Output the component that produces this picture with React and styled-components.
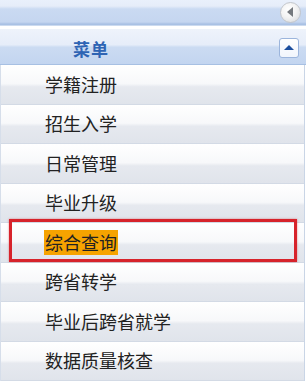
import React from "react";
import styled, { createGlobalStyle } from "styled-components";

const GlobalStyle = createGlobalStyle`
  body {
    margin: 0;
    background: #ffffff;
    font-family: "Microsoft YaHei", "Noto Sans CJK SC", "Noto Sans", sans-serif;
  }
`;

const Panel = styled.div`
  width: 306px;
  display: flex;
  flex-direction: column;
`;

const TopBar = styled.div`
  height: 26px;
  display: flex;
  align-items: center;
  justify-content: flex-end;
  padding-right: 5px;
  box-sizing: border-box;
  background: linear-gradient(
    #e9f0fb 0,
    #e6edf9 6px,
    #cadaf2 9px,
    #c5d6f0 22px,
    #a9c1e4 24px,
    #a9c1e4 25px,
    #eef3fa 26px
  );
  margin-bottom: 3px;
`;

const CircleButton = styled.div`
  width: 19px;
  height: 19px;
  border-radius: 50%;
  border: 1px solid #c3c6cb;
  background: radial-gradient(circle at 40% 35%, #ffffff 0, #f3f3f3 45%, #d3d6da 100%);
  display: flex;
  align-items: center;
  justify-content: center;
  margin-top: -2px;
`;

const LeftArrow = styled.span`
  width: 0;
  height: 0;
  border-top: 5px solid transparent;
  border-bottom: 5px solid transparent;
  border-right: 6px solid #74787d;
  margin-left: -2px;
`;

const Header = styled.div`
  height: 36px;
  box-sizing: border-box;
  border-bottom: 1px solid #a7c0e3;
  display: flex;
  align-items: center;
  justify-content: space-between;
  padding: 0 7px 0 73px;
  background: linear-gradient(#eef3fb 0, #e6edf9 45%, #cbdbf2 52%, #c3d5f0 100%);
`;

const HeaderTitle = styled.span`
  font-size: 17px;
  font-weight: bold;
  color: #2e64b4;
  letter-spacing: 1px;
  margin-top: 3px;
`;

const ToggleButton = styled.div`
  width: 18px;
  height: 18px;
  border: 1px solid #9cb5dc;
  border-radius: 3px;
  background: linear-gradient(#ffffff, #f1f5fc);
  display: flex;
  align-items: center;
  justify-content: center;
  margin-top: 2px;
`;

const UpArrow = styled.span`
  width: 0;
  height: 0;
  border-left: 5px solid transparent;
  border-right: 5px solid transparent;
  border-bottom: 5px solid #1d4f9e;
`;

const List = styled.div`
  display: flex;
  flex-direction: column;
  width: 305px;
  box-sizing: border-box;
  border-left: 1px solid #d6deea;
  border-right: 1px solid #c9d5e6;
`;

const Item = styled.div`
  position: relative;
  height: 39.5px;
  box-sizing: border-box;
  border-bottom: 1px solid #d3dae5;
  display: flex;
  align-items: center;
  padding-left: 43px;
  font-size: 18px;
  color: #222222;
  background: linear-gradient(#ffffff 0, #f7f8fa 48%, #e6e9ef 56%, #e0e4eb 100%);

  ${(p) =>
    p.$marked &&
    `
    &::after {
      content: "";
      position: absolute;
      left: 8px;
      right: 7px;
      top: -4px;
      bottom: 0;
      border: 3px solid #d7232b;
      box-shadow: 0 0 2px rgba(200, 30, 30, 0.5);
    }
  `}
`;

const Label = styled.span`
  padding: 0 1px;
  line-height: 25px;
  background: ${(p) => (p.$active ? "#f6a300" : "transparent")};
`;

const items = [
  "学籍注册",
  "招生入学",
  "日常管理",
  "毕业升级",
  "综合查询",
  "跨省转学",
  "毕业后跨省就学",
  "数据质量核查",
];

export default function App() {
  return (
    <>
      <GlobalStyle />
      <Panel>
        <TopBar>
          <CircleButton>
            <LeftArrow />
          </CircleButton>
        </TopBar>
        <Header>
          <HeaderTitle>菜单</HeaderTitle>
          <ToggleButton>
            <UpArrow />
          </ToggleButton>
        </Header>
        <List>
          {items.map((text) => {
            const active = text === "综合查询";
            return (
              <Item key={text} $marked={active}>
                <Label $active={active}>{text}</Label>
              </Item>
            );
          })}
        </List>
      </Panel>
    </>
  );
}
